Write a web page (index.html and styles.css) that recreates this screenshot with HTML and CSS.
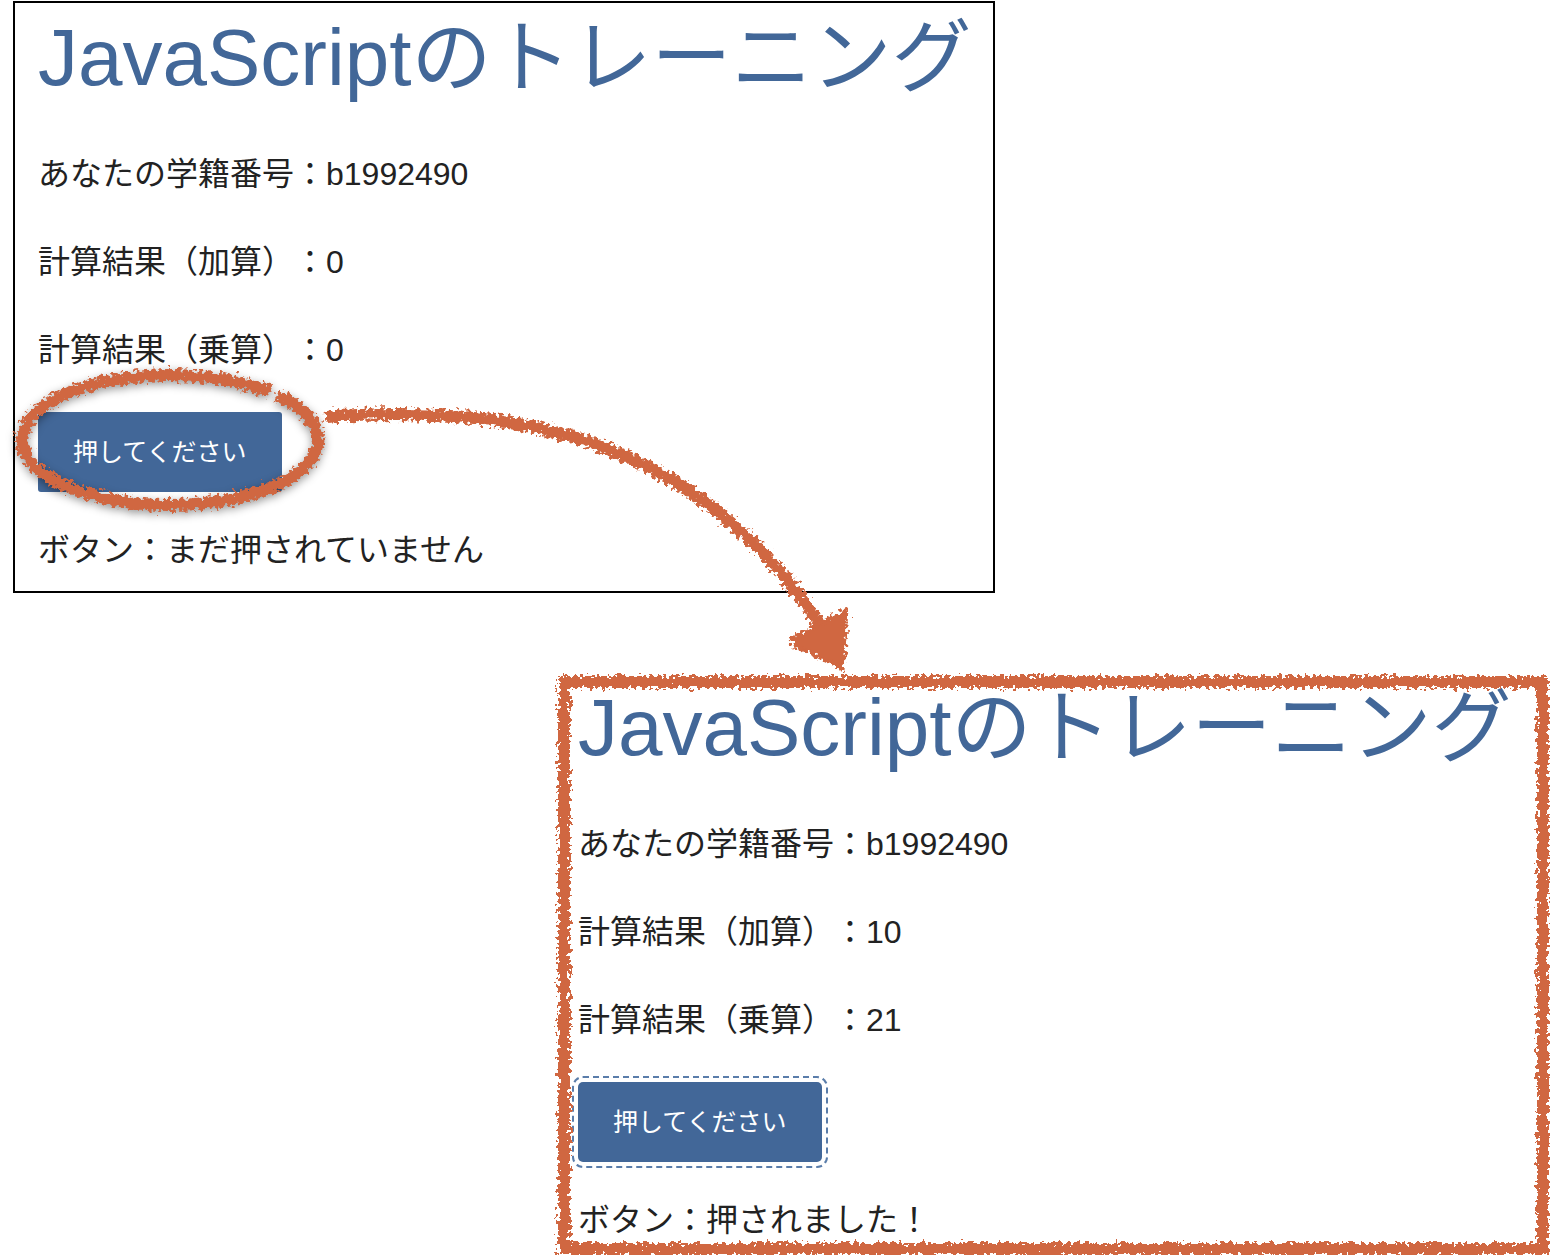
FILE: index.html
```html
<!DOCTYPE html>
<html lang="ja">
<head>
<meta charset="utf-8">
<meta name="viewport" content="width=device-width, initial-scale=1">
<title>JavaScriptのトレーニング</title>
<link rel="stylesheet" href="styles.css">
</head>
<body>
<main class="steps">
  <section class="panel panel-before">
    <h1 class="title">JavaScriptのトレーニング</h1>
    <div class="content">
      <p class="line">あなたの学籍番号：b1992490</p>
      <p class="line">計算結果（加算）：0</p>
      <p class="line">計算結果（乗算）：0</p>
      <div class="action">
        <button class="button" type="button">押してください</button>
        <svg class="circle" viewBox="0 0 340 170" aria-hidden="true">
          <path class="chalk" d="M270 37 A148 65 0 1 0 277 40"/>
        </svg>
      </div>
      <p class="line">ボタン：まだ押されていません</p>
    </div>
  </section>

  <section class="panel panel-after">
    <h1 class="title">JavaScriptのトレーニング</h1>
    <div class="content">
      <p class="line">あなたの学籍番号：b1992490</p>
      <p class="line">計算結果（加算）：10</p>
      <p class="line">計算結果（乗算）：21</p>
      <div class="action">
        <button class="button button-focused" type="button">押してください</button>
      </div>
      <p class="line">ボタン：押されました！</p>
    </div>
    <svg class="frame" aria-hidden="true">
      <rect class="chalk frame-line" x="6" y="9"/>
    </svg>
  </section>

  <svg class="arrow" viewBox="300 390 570 300" aria-hidden="true">
    <defs>
      <filter id="rough" filterUnits="userSpaceOnUse" x="-20" y="-20" width="1700" height="1400" color-interpolation-filters="sRGB">
        <feTurbulence type="fractalNoise" baseFrequency="0.25" numOctaves="3" seed="4" result="noise"/>
        <feDisplacementMap in="SourceGraphic" in2="noise" scale="13" xChannelSelector="R" yChannelSelector="G"/>
      </filter>
    </defs>
    <g class="arrow-shape">
      <path class="arrow-line" d="M325 417 C540 400 710 453 823 630"/>
      <path class="arrow-head" d="M847 609 L791 639 L793 645 L843 669 Z"/>
    </g>
  </svg>
</main>
</body>
</html>
```

FILE: styles.css
```css
* {
  box-sizing: border-box;
}

body {
  margin: 0;
  background: #fff;
  color: #222;
  font-family: "Liberation Sans", "Noto Sans CJK JP", sans-serif;
  font-size: 32px;
  line-height: 48px;
  text-spacing-trim: space-all;
}

.steps {
  position: relative;
  display: grid;
  grid-template-columns: 545fr 437fr 554fr;
  row-gap: 80px;
  padding: 1px 1px 0 13px;
}

.panel {
  min-width: 0;
  white-space: nowrap;
}

.panel-before {
  grid-column: 1 / 3;
  padding: 0 0 17px 23px;
  border: 2px solid #000;
}

.panel-after {
  position: relative;
  grid-column: 2 / 4;
  padding: 0 0 11px 20px;
}

.title {
  margin: 0 0 37px;
  color: #426798;
  font-size: 80px;
  font-weight: 400;
  line-height: 110px;
}

.content {
  display: flex;
  flex-direction: column;
  align-items: flex-start;
}

.line {
  margin: 0 0 40px;
}

.line:last-child {
  margin-bottom: 0;
}

.action {
  position: relative;
  display: flex;
  margin: -2px 0 34px;
}

.button {
  padding: 27px 35px;
  border: 0;
  border-radius: 3px;
  background: #426798;
  color: #fff;
  font-family: inherit;
  font-size: 25px;
  line-height: 26px;
}

.button-focused {
  border-radius: 5px;
  outline: 2px dashed #5a7daa;
  outline-offset: 4px;
}

.circle,
.frame,
.arrow {
  position: absolute;
  overflow: visible;
  pointer-events: none;
}

.circle {
  top: -57px;
  left: -38px;
  width: 340px;
  height: 170px;
  filter: drop-shadow(0 3px 4px rgba(0, 0, 0, 0.4));
}

.frame {
  top: 0;
  left: 0;
  width: 100%;
  height: 100%;
}

.frame-line {
  width: calc(100% - 12px);
  height: calc(100% - 15px);
}

.chalk {
  fill: none;
  stroke: #d06741;
  stroke-width: 12px;
  filter: url(#rough);
}

.arrow {
  top: 390px;
  left: 300px;
  width: 570px;
  height: 300px;
}

.arrow-shape {
  filter: url(#rough);
}

.arrow-line {
  fill: none;
  stroke: #d06741;
  stroke-width: 12px;
}

.arrow-head {
  fill: #d06741;
  stroke: #d06741;
  stroke-width: 3px;
  stroke-linejoin: round;
}
```
